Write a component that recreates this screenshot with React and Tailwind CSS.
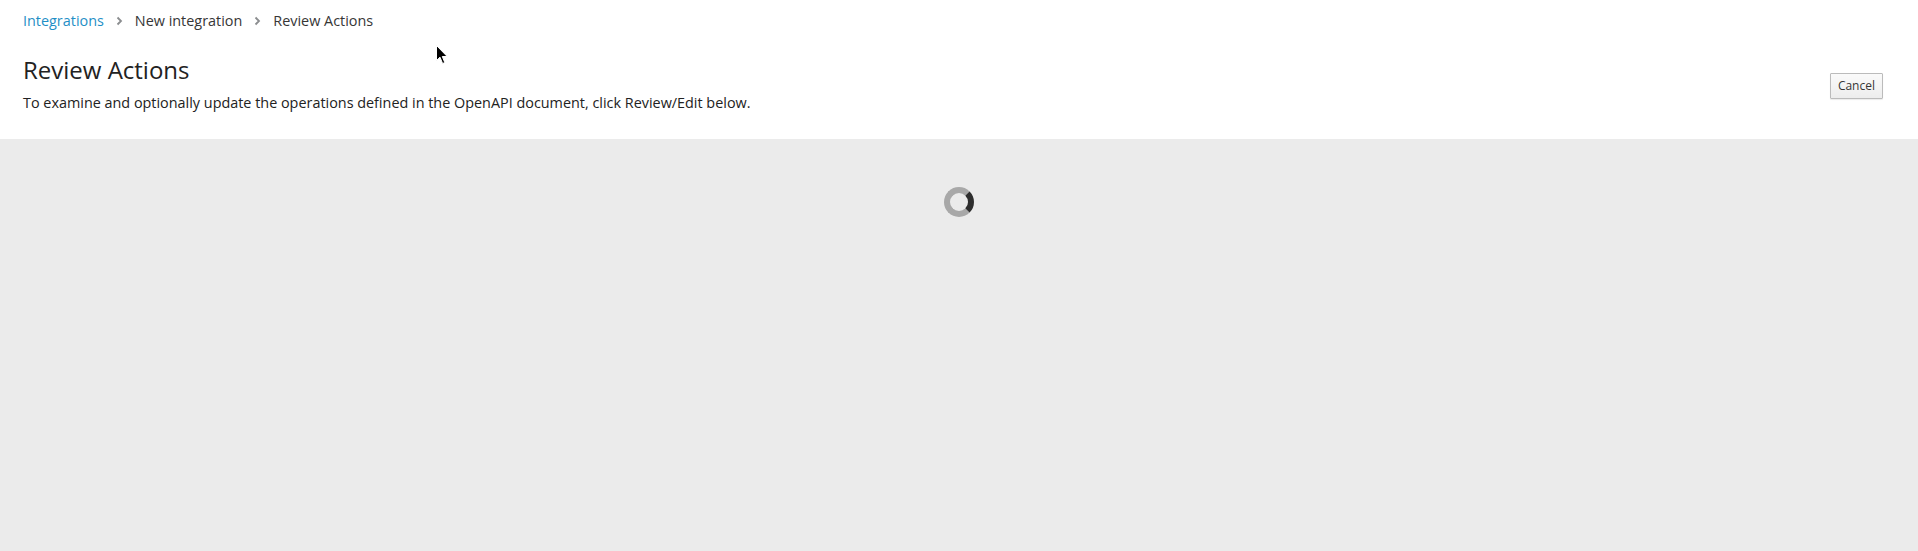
import React from 'react';

function Chevron() {
  return (
    <svg width="9" height="10" viewBox="0 0 9 10" className="mx-[11px]">
      <path d="M2.5 1.5 L6 5 L2.5 8.5" fill="none" stroke="#8b8d8f" strokeWidth="1.8" />
    </svg>
  );
}

function Cursor() {
  return (
    <svg width="13" height="20" viewBox="0 0 13 20" className="absolute left-[436px] top-[45px]">
      <path d="M0.5 0.5 L0.5 15.5 L4 12.2 L6.6 18.5 L8.8 17.6 L6.3 11.5 L11.2 11.5 Z" fill="#000" stroke="#fff" strokeWidth="1" />
    </svg>
  );
}

export default function App() {
  return (
    <div className="relative w-[1918px] h-[551px] flex flex-col bg-[#ebebeb] font-['Open_Sans',sans-serif] text-[#363636]">
      <div className="h-[139px] bg-white px-[23px] flex flex-col">
        <div className="flex items-center h-[42px] text-[14.4px]">
          <span className="text-[#1f8fc6]">Integrations</span>
          <Chevron />
          <span>New integration</span>
          <Chevron />
          <span>Review Actions</span>
        </div>
        <div className="flex justify-between items-start">
          <div>
            <h1 className="text-[24px] leading-[30px] mt-[13px] text-[#222]">Review Actions</h1>
            <p className="text-[14.4px] leading-[20px] mt-[8px] text-[#222]">
              To examine and optionally update the operations defined in the OpenAPI document, click Review/Edit below.
            </p>
          </div>
          <button className="mt-[31px] mr-[12px] h-[26px] px-[7px] border border-[#bbbbbb] rounded-[1px] bg-gradient-to-b from-[#fafafa] to-[#ededed] text-[12px] text-[#363636] shadow-[0_1px_1px_rgba(0,0,0,0.08)]">
            Cancel
          </button>
        </div>
      </div>
      <div className="flex justify-center pt-[48px]">
        <div className="w-[30px] h-[30px] rounded-full border-[6px] border-[#a8a8a8] border-r-[#2e2e2e]" />
      </div>
      <Cursor />
    </div>
  );
}
